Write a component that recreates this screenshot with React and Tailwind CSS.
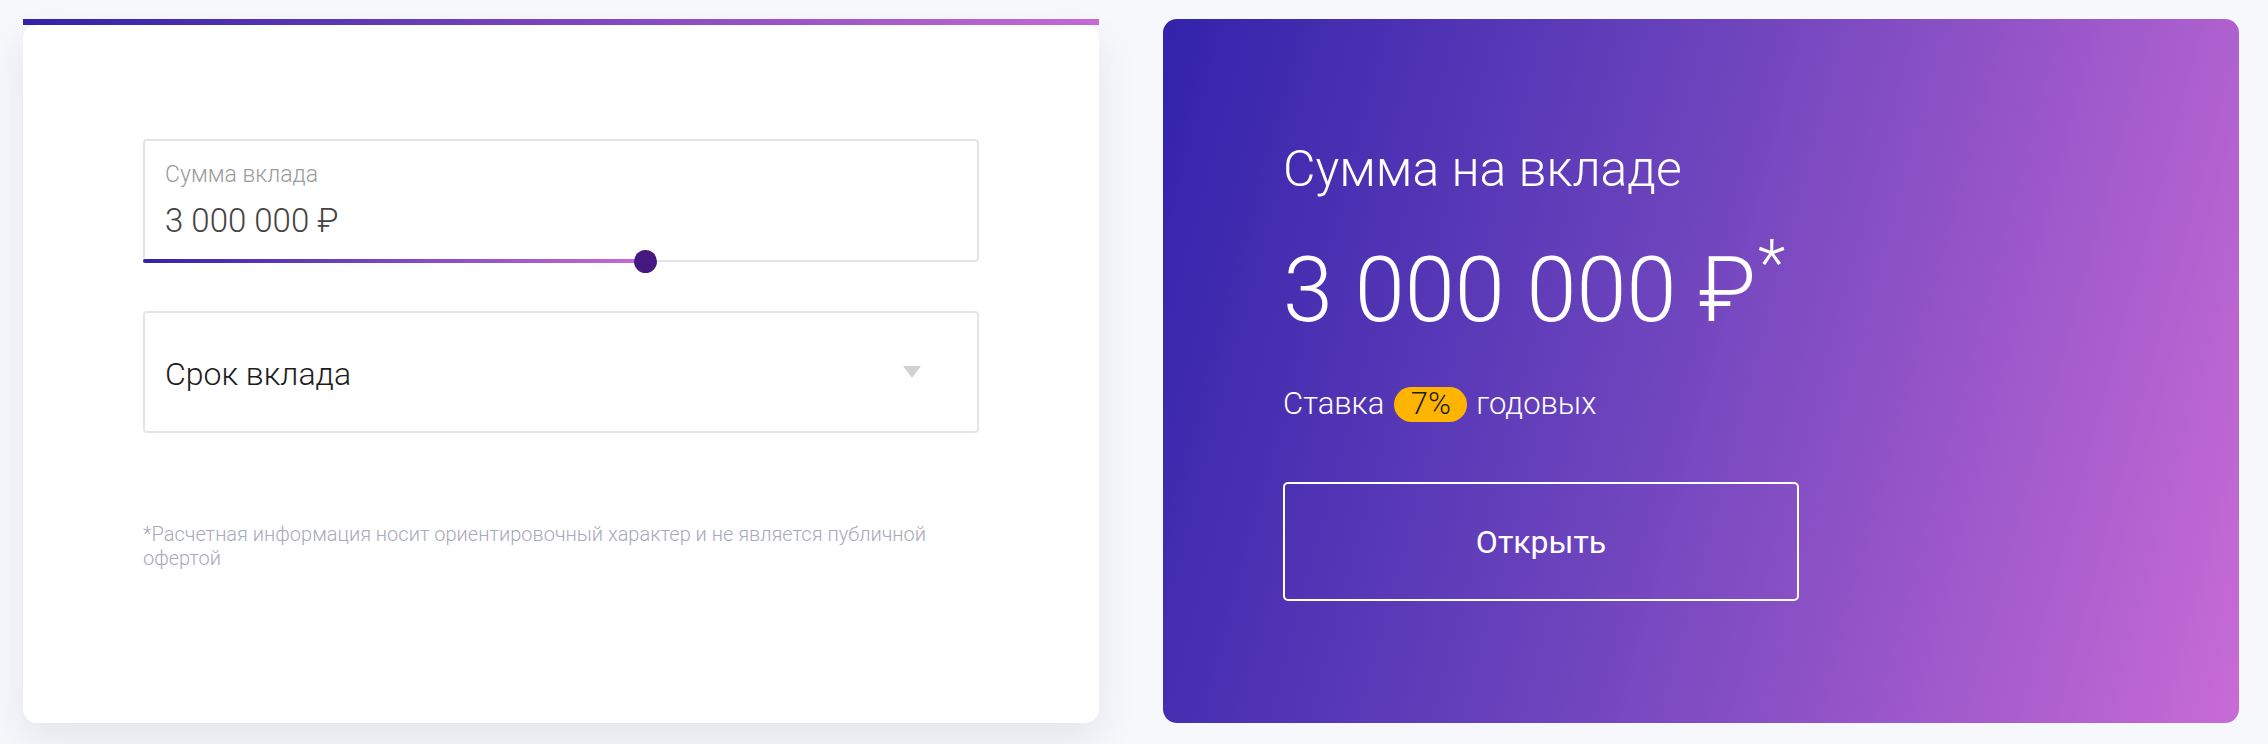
import React from 'react';

const font = "font-['Roboto','Liberation_Sans',sans-serif]";

function AmountField() {
  return (
    <div className="relative h-[123px] rounded-[4px] border-2 border-[#e4e4e4] px-[20px] pt-[20px]">
      <div className="text-[23px] leading-[28px] font-light text-[#9b9b9b]">Сумма вклада</div>
      <div className="mt-[12px] text-[33px] leading-[40px] font-light text-[#444]">3 000 000 ₽</div>
      {/* slider */}
      <div className="absolute left-[-2px] bottom-[-3px] h-[4px] w-[503px] rounded-full bg-[linear-gradient(90deg,#3323ab,#c86bd6)]" />
      <div className="absolute left-[489px] bottom-[-13px] h-[23px] w-[23px] rounded-full bg-[#45197f]" />
    </div>
  );
}

function TermSelect() {
  return (
    <div className="mt-[49px] flex h-[122px] items-center justify-between rounded-[4px] border-2 border-[#e4e4e4] pl-[20px] pr-[56px]">
      <span className="mt-[4px] text-[32px] leading-[36px] font-light text-[#1c1c1c]">Срок вклада</span>
      <svg width="18" height="12" viewBox="0 0 18 12">
        <path d="M0 0 L18 0 L9 12 Z" fill="#d2d2d2" />
      </svg>
    </div>
  );
}

export default function App() {
  return (
    <div className={`${font} min-h-[744px] bg-[#f7f8fc] pl-[23px] pt-[19px]`}>
      <div className="grid grid-cols-[1076px_1076px] gap-[64px]">
        {/* Left: calculator */}
        <div className="flex h-[704px] flex-col">
          <div className="h-[6px] bg-[linear-gradient(90deg,#3223ab,#c86bd6)]" />
          <div className="flex-1 rounded-[14px] bg-white px-[120px] pt-[114px] shadow-[0_16px_40px_rgba(30,30,70,0.09)]">
            <AmountField />
            <TermSelect />
            <p className="mt-[89px] text-[20px] leading-[24px] font-light text-[#a9a9ba]">
              *Расчетная информация носит ориентировочный характер и не является публичной офертой
            </p>
          </div>
        </div>

        {/* Right: result */}
        <div className="h-[704px] rounded-[14px] bg-[linear-gradient(105deg,#3223ab_0%,#6d44bd_45%,#c86bd6_100%)] px-[120px] pt-[120px] text-white">
          <h2 className="text-[50px] leading-[60px] font-light">Сумма на вкладе</h2>
          <div className="mt-[42px] flex items-start">
            <span className="text-[90px] leading-[100px] font-light">3 000 000 ₽</span>
            <span className="ml-[2px] mt-[-12px] text-[64px] leading-[70px] font-light">*</span>
          </div>
          <div className="mt-[45px] flex items-center text-[31px] leading-[36px] font-light">
            <span>Ставка</span>
            <span className="ml-[10px] mr-[9px] inline-flex h-[35px] w-[73px] items-center justify-center rounded-full bg-[#ffb400] text-[#1a1a1a]">7%</span>
            <span>годовых</span>
          </div>
          <button className="mt-[60px] flex h-[119px] w-[516px] items-center justify-center rounded-[5px] border-2 border-white text-[32px] font-normal text-white">
            Открыть
          </button>
        </div>
      </div>
    </div>
  );
}
